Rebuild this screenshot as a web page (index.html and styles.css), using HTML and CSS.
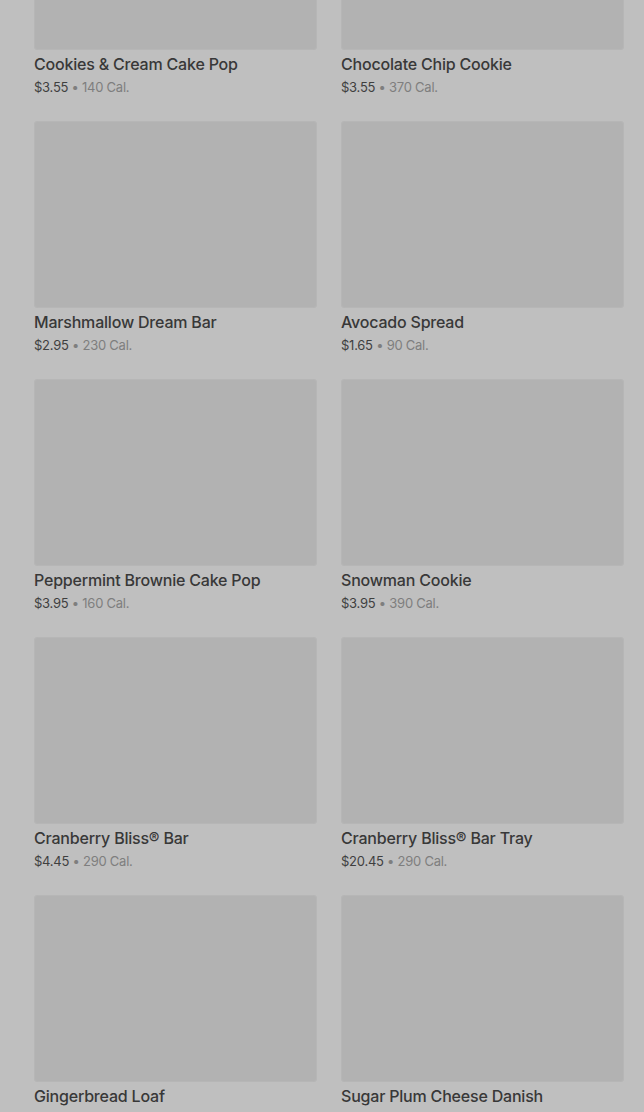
FILE: index.html
```html
<!DOCTYPE html>
<html lang="en">
<head>
<meta charset="utf-8">
<title>Menu</title>
<link rel="stylesheet" href="styles.css">
</head>
<body>
<main class="grid">
  <div class="card"><div class="thumb"></div><div class="name">Cookies &amp; Cream Cake Pop</div><div class="meta"><span class="price">$3.55</span> <span class="cal">• 140 Cal.</span></div></div>
  <div class="card"><div class="thumb"></div><div class="name">Chocolate Chip Cookie</div><div class="meta"><span class="price">$3.55</span> <span class="cal">• 370 Cal.</span></div></div>
  <div class="card"><div class="thumb"></div><div class="name">Marshmallow Dream Bar</div><div class="meta"><span class="price">$2.95</span> <span class="cal">• 230 Cal.</span></div></div>
  <div class="card"><div class="thumb"></div><div class="name">Avocado Spread</div><div class="meta"><span class="price">$1.65</span> <span class="cal">• 90 Cal.</span></div></div>
  <div class="card"><div class="thumb"></div><div class="name">Peppermint Brownie Cake Pop</div><div class="meta"><span class="price">$3.95</span> <span class="cal">• 160 Cal.</span></div></div>
  <div class="card"><div class="thumb"></div><div class="name">Snowman Cookie</div><div class="meta"><span class="price">$3.95</span> <span class="cal">• 390 Cal.</span></div></div>
  <div class="card"><div class="thumb"></div><div class="name">Cranberry Bliss® Bar</div><div class="meta"><span class="price">$4.45</span> <span class="cal">• 290 Cal.</span></div></div>
  <div class="card"><div class="thumb"></div><div class="name">Cranberry Bliss® Bar Tray</div><div class="meta"><span class="price">$20.45</span> <span class="cal">• 290 Cal.</span></div></div>
  <div class="card"><div class="thumb"></div><div class="name">Gingerbread Loaf</div><div class="meta"><span class="price">$3.45</span> <span class="cal">• 370 Cal.</span></div></div>
  <div class="card"><div class="thumb"></div><div class="name">Sugar Plum Cheese Danish</div><div class="meta"><span class="price">$3.75</span> <span class="cal">• 370 Cal.</span></div></div>
</main>
</body>
</html>
```
FILE: styles.css
```css
html, body {
  margin: 0;
  padding: 0;
  background: #bfbfbf;
  overflow: hidden;
  height: 1112px;
}
.grid {
  display: grid;
  grid-template-columns: 283px 283px;
  column-gap: 24px;
  row-gap: 23px;
  padding: 0 20px 0 34px;
  margin-top: -137px;
  font-family: Inter, "Noto Sans", sans-serif;
}
.card {
  display: flex;
  flex-direction: column;
}
.thumb {
  height: 187px;
  background: #b2b2b2;
  border-radius: 4px;
  box-shadow: inset 0 0 0 1px #b6b6b6;
}
.name {
  margin-top: 2px;
  font-size: 16px;
  line-height: 24px;
  font-weight: 500;
  color: #383838;
  letter-spacing: -0.2px;
}
.meta {
  margin-top: 1px;
  font-size: 13px;
  line-height: 21px;
  letter-spacing: -0.25px;
}
.price {
  color: #3f3f3f;
}
.cal {
  color: #7e7e7e;
}
```
